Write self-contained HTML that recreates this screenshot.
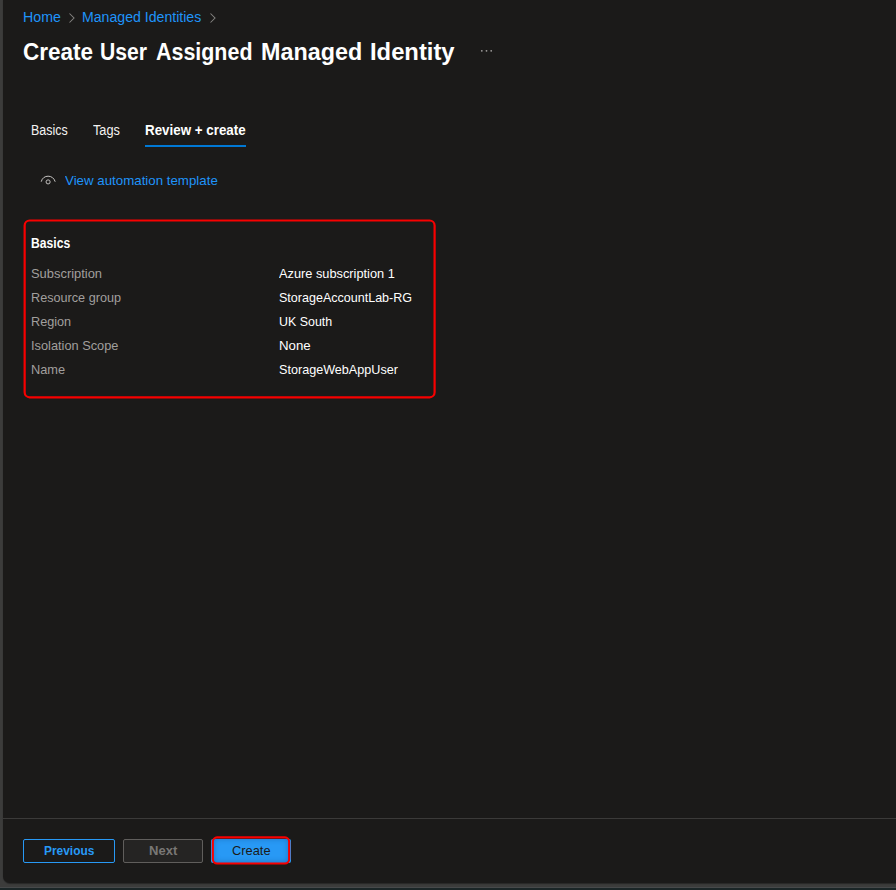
<!DOCTYPE html>
<html><head><meta charset="utf-8">
<style>
*{box-sizing:border-box;margin:0;padding:0}
html,body{width:896px;height:890px;overflow:hidden;background:#3c3c3b;font-family:"Liberation Sans",sans-serif;}
#under{position:absolute;left:0;top:887px;width:896px;height:3px;background:linear-gradient(#47494a 0,#47494a 0.8px,#1b2627 1.4px,#1b2627 3px)}
#panel{position:absolute;left:3px;top:0;width:893px;height:882.6px;background:#1b1a19;border-bottom-left-radius:7px;box-shadow:0 0.5px 1px rgba(0,0,0,0.35)}
.t{position:absolute;transform-origin:0 0;white-space:nowrap;line-height:1;}
.tw{font-size:23px;font-weight:bold;color:#fff}
.lnk{color:#1f94fa}
.lab{color:#a19f9d;font-size:13px}
.val{color:#ffffff;font-size:13px}
#divider{position:absolute;left:3px;top:818px;width:893px;height:1px;background:#3b3a39}
.btn{position:absolute;top:839px;height:24px;border-radius:2px}
</style></head><body>
<div id="panel"></div>
<div id="under"></div>

<span class="t lnk" id="bc1" style="transform:scaleX(1.014);left:22.8px;top:10px;font-size:14px">Home</span>
<svg style="position:absolute;left:68px;top:12px" width="8" height="12" viewBox="0 0 8 12"><path d="M1.5 1.5 L6 6 L1.5 10.5" fill="none" stroke="#858381" stroke-width="1.05"/></svg>
<span class="t lnk" id="bc2" style="transform:scaleX(1.008);left:82.3px;top:10px;font-size:14px">Managed Identities</span>
<svg style="position:absolute;left:209px;top:12px" width="8" height="12" viewBox="0 0 8 12"><path d="M1.5 1.5 L6 6 L1.5 10.5" fill="none" stroke="#858381" stroke-width="1.05"/></svg>

<span class="t tw" id="tw1" style="transform:scaleX(0.979);left:22.9px;top:41px">Create</span>
<span class="t tw" id="tw2" style="transform:scaleX(0.92);left:100.2px;top:41px">User</span>
<span class="t tw" id="tw3" style="transform:scaleX(0.932);left:155.6px;top:41px">Assigned</span>
<span class="t tw" id="tw4" style="transform:scaleX(1.015);left:260.6px;top:41px">Managed</span>
<span class="t tw" id="tw5" style="transform:scaleX(1.034);left:369.6px;top:41px">Identity</span>
<svg style="position:absolute;left:480px;top:49px" width="13" height="4"><circle cx="1.8" cy="1.8" r="0.9" fill="#a19f9d"/><circle cx="6.5" cy="1.8" r="0.9" fill="#a19f9d"/><circle cx="11.2" cy="1.8" r="0.9" fill="#a19f9d"/></svg>

<span class="t" id="tab1" style="transform:scaleX(0.89);left:30.7px;top:123.3px;font-size:14px;color:#f3f2f1">Basics</span>
<span class="t" id="tab2" style="transform:scaleX(0.91);left:92.6px;top:123.3px;font-size:14px;color:#f3f2f1">Tags</span>
<span class="t" id="tab3" style="transform:scaleX(0.954);left:145.0px;top:123.3px;font-size:14px;font-weight:bold;color:#fff">Review + create</span>
<div id="tabline" style="position:absolute;left:145px;top:145px;width:101px;height:2px;background:#0078d4"></div>

<svg id="eye" style="position:absolute;left:39px;top:173px" width="18" height="14" viewBox="0 0 18 14"><path d="M2.2 8.7 C3.2 4.9 6 3.2 9.1 3.2 C12.2 3.2 15 4.9 16.2 8.7" fill="none" stroke="#c8c6c4" stroke-width="1.0"/><circle cx="9.1" cy="8.9" r="2.05" fill="none" stroke="#c8c6c4" stroke-width="0.95"/></svg>
<span class="t lnk" id="vat" style="transform:scaleX(1.023);left:64.8px;top:174px;font-size:13px">View automation template</span>

<svg id="box" style="position:absolute;left:0;top:200px" width="460" height="220"><rect x="24.65" y="20.5" width="409.95" height="176.8" rx="5" fill="none" stroke="#f80000" stroke-width="2.2"/></svg>
<span class="t" id="bh" style="transform:scaleX(0.867);left:31.0px;top:236.2px;font-size:14px;font-weight:bold;color:#fff">Basics</span>

<span class="t lab" id="l1" style="transform:scaleX(0.993);left:30.6px;top:267px">Subscription</span>
<span class="t lab" id="l2" style="transform:scaleX(0.973);left:30.6px;top:291px">Resource group</span>
<span class="t lab" id="l3" style="transform:scaleX(0.975);left:30.6px;top:315px">Region</span>
<span class="t lab" id="l4" style="transform:scaleX(0.983);left:30.6px;top:339px">Isolation Scope</span>
<span class="t lab" id="l5" style="transform:scaleX(0.985);left:30.6px;top:363px">Name</span>

<span class="t val" id="v1" style="transform:scaleX(0.983);left:278.6px;top:267px">Azure subscription 1</span>
<span class="t val" id="v2" style="transform:scaleX(0.964);left:278.6px;top:291px">StorageAccountLab-RG</span>
<span class="t val" id="v3" style="transform:scaleX(0.955);left:278.6px;top:315px">UK South</span>
<span class="t val" id="v4" style="transform:scaleX(1.02);left:278.6px;top:339px">None</span>
<span class="t val" id="v5" style="transform:scaleX(0.97);left:278.6px;top:363px">StorageWebAppUser</span>

<div id="divider"></div>
<div class="btn" id="bprev" style="left:23px;width:92px;border:1px solid #2899f5"></div>
<span class="t" id="tprev" style="transform:scaleX(0.917);left:43.7px;top:844px;font-size:13px;font-weight:bold;color:#2899f5">Previous</span>
<div class="btn" id="bnext" style="left:123px;width:80px;border:1px solid #605e5c;background:#252423"></div>
<span class="t" id="tnext" style="left:149.1px;top:844px;font-size:13px;font-weight:bold;color:#797775">Next</span>
<div class="btn" id="bcreate" style="left:211px;width:80px;background:#2899f5"></div>
<div id="cshade" style="position:absolute;left:213px;top:838px;width:76px;height:25px;border-radius:3px;box-shadow:inset 0 0 6px rgba(10,40,100,0.4)"></div>
<svg id="credbox" style="position:absolute;left:200px;top:830px" width="110" height="40"><rect x="12.85" y="7.4" width="76.3" height="26.1" rx="4.2" fill="none" stroke="#f80000" stroke-width="2.1"/></svg>
<span class="t" id="tcreate" style="transform:scaleX(0.987);left:231.9px;top:844px;font-size:13px;color:#1b1a19">Create</span>
</body></html>
